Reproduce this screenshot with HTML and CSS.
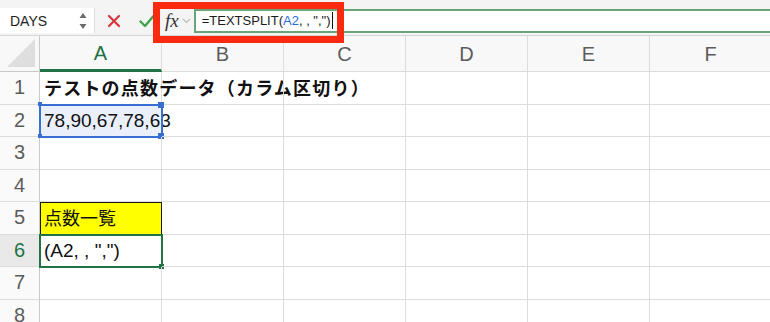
FILE: index.html
```html
<!DOCTYPE html>
<html lang="ja">
<head>
    <meta charset="UTF-8">
    <title>TEXTSPLIT</title>
    <link rel="stylesheet" href="styles.css">
</head>
<body>
  <div class="toolbar">
    <div class="namebox">
      <span class="name">DAYS</span>
      <span class="spin">
        <svg width="8" height="20" viewBox="0 0 8 20"><path d="M4 2 L7.5 7 L0.5 7 Z M0.5 13 L7.5 13 L4 18 Z" fill="#6b6b6b"/></svg>
      </span>
    </div>
    <div class="btns">
      <svg class="cancel" width="14" height="14" viewBox="0 0 14 14"><path d="M2 2 L12 12 M12 2 L2 12" stroke="#d8363c" stroke-width="2.2" stroke-linecap="round"/></svg>
      <svg class="enter" width="16" height="14" viewBox="0 0 16 14"><path d="M1.5 7.5 L6 12 L14.5 2" stroke="#3fa34d" stroke-width="2.4" fill="none" stroke-linecap="round" stroke-linejoin="round"/></svg>
    </div>
    <div class="fx">
      <span class="fxlabel">fx</span>
      <svg width="9" height="6" viewBox="0 0 9 6"><path d="M1 1 L4.5 4.5 L8 1" stroke="#bdbdbd" stroke-width="1.2" fill="none"/></svg>
    </div>
    <div class="formula">=TEXTSPLIT(<span class="ref">A2</span>, , ",")<span class="caret"></span></div>
    <div class="mark"></div>
  </div>

  <div class="sheet">
    <div class="hd corner"><span class="tri"></span></div>
    <div class="hd col active">A</div>
    <div class="hd col">B</div>
    <div class="hd col">C</div>
    <div class="hd col">D</div>
    <div class="hd col">E</div>
    <div class="hd col">F</div>

    <div class="hd row">1</div>
    <div class="cell title">テストの点数データ（カラム区切り）</div>
    <div class="cell"></div><div class="cell"></div><div class="cell"></div><div class="cell"></div><div class="cell"></div>

    <div class="hd row">2</div>
    <div class="cell num picked">78,90,67,78,63
      <span class="knob tl"></span><span class="knob tr"></span><span class="knob bl"></span><span class="knob br"></span>
    </div>
    <div class="cell"></div><div class="cell"></div><div class="cell"></div><div class="cell"></div><div class="cell"></div>

    <div class="hd row">3</div>
    <div class="cell"></div><div class="cell"></div><div class="cell"></div><div class="cell"></div><div class="cell"></div><div class="cell"></div>

    <div class="hd row">4</div>
    <div class="cell"></div><div class="cell"></div><div class="cell"></div><div class="cell"></div><div class="cell"></div><div class="cell"></div>

    <div class="hd row">5</div>
    <div class="cell label">点数一覧</div>
    <div class="cell"></div><div class="cell"></div><div class="cell"></div><div class="cell"></div><div class="cell"></div>

    <div class="hd row current">6</div>
    <div class="cell num editing">(A2, , ",")<span class="fill"></span></div>
    <div class="cell"></div><div class="cell"></div><div class="cell"></div><div class="cell"></div><div class="cell"></div>

    <div class="hd row">7</div>
    <div class="cell"></div><div class="cell"></div><div class="cell"></div><div class="cell"></div><div class="cell"></div><div class="cell"></div>

    <div class="hd row">8</div>
    <div class="cell"></div><div class="cell"></div><div class="cell"></div><div class="cell"></div><div class="cell"></div><div class="cell"></div>
  </div>
</body>
</html>
```

FILE: styles.css
```css
body {
    margin: 0;
    background: #ffffff;
    font-family: "Liberation Sans", Arial, "Noto Sans CJK JP", sans-serif;
    overflow: hidden;
}

.toolbar {
    position: relative;
    display: flex;
    align-items: center;
    height: 35px;
    background: #f4f4f4;
    border-bottom: 1px solid #d6d6d6;
}
.namebox {
    display: flex;
    align-items: center;
    justify-content: space-between;
    width: 95px;
    height: 25px;
    margin-top: 6px;
    padding: 0 7px 0 10px;
    box-sizing: border-box;
    background: #ffffff;
    border-right: 1px solid #dddddd;
    font-size: 14px;
    color: #1d1d1d;
}
.spin svg { display: block; }
.btns {
    display: flex;
    align-items: center;
    gap: 18px;
    margin: 6px 0 0 12px;
}
.btns svg { display: block; }
.fx {
    display: flex;
    align-items: center;
    gap: 3px;
    margin: 6px 0 0 10px;
}
.fxlabel {
    font-family: "Liberation Serif", "Times New Roman", serif;
    font-style: italic;
    font-size: 19px;
    color: #333333;
}
.formula {
    flex: 1;
    height: 20px;
    margin: 6px 0 0 3px;
    padding-left: 6px;
    background: #ffffff;
    border-top: 2px solid #6aa57a;
    border-bottom: 2px solid #6aa57a;
    border-left: 2px solid #6aa57a;
    font-size: 13px;
    line-height: 20px;
    color: #1b1b1b;
}
.ref { color: #2c6bd6; }
.caret {
    display: inline-block;
    width: 1px;
    height: 17px;
    margin-left: 1px;
    vertical-align: -4px;
    background: #111111;
}
.mark {
    position: absolute;
    left: 153px;
    top: 2px;
    width: 191px;
    height: 41px;
    box-sizing: border-box;
    border: 7px solid #fa2a10;
}

.sheet {
    display: grid;
    grid-template-columns: 40px repeat(6, 122px);
    grid-template-rows: 36px repeat(8, 32.5px);
}
.hd {
    display: flex;
    align-items: center;
    justify-content: center;
    box-sizing: border-box;
    background: #f8f8f8;
    color: #5c5c5c;
    font-size: 20px;
    border-right: 1px solid #dcdcdc;
    border-bottom: 1px solid #dcdcdc;
}
.hd.col { padding-top: 2px; }
.hd.corner {
    position: relative;
    border-right: 1px solid #c9c9c9;
    border-bottom: 1px solid #c9c9c9;
}
.tri {
    position: absolute;
    right: 4px;
    bottom: 4px;
    width: 0;
    height: 0;
    border-left: 28px solid transparent;
    border-bottom: 28px solid #dedede;
}
.hd.row {
    border-right: 1px solid #c9c9c9;
    background: #fafafa;
}
.hd.active {
    color: #217346;
    border-bottom: 3px solid #217346;
}
.hd.current {
    color: #217346;
    background: #e9e9e9;
}

.cell {
    position: relative;
    box-sizing: border-box;
    padding-left: 4px;
    border-right: 1px solid #dcdcdc;
    border-bottom: 1px solid #dcdcdc;
    font-size: 18px;
    line-height: 31px;
    white-space: nowrap;
    color: #111111;
}
.title {
    font-family: "Noto Sans CJK JP", sans-serif;
    font-weight: bold;
    font-size: 18px;
    letter-spacing: 1.2px;
}
.num { font-size: 19px; }
.label {
    font-family: "Noto Sans CJK JP", sans-serif;
    background: #ffff00;
    outline: 1px solid #1a1a1a;
    outline-offset: -1px;
}
.picked {
    background: #eaf0fb;
    outline: 2px solid #3a6fd2;
    outline-offset: -1px;
}
.knob {
    position: absolute;
    width: 6px;
    height: 6px;
    background: #3a6fd2;
}
.knob.tl { left: -2px; top: -3px; width: 4px; height: 4px; }
.knob.tr { right: -3px; top: -3px; }
.knob.bl { left: -2px; bottom: -2px; width: 4px; height: 4px; }
.knob.br { right: -3px; bottom: -3px; }
.editing {
    outline: 2px solid #217346;
    outline-offset: -1px;
}
.fill {
    position: absolute;
    right: -3px;
    bottom: -3px;
    width: 5px;
    height: 5px;
    background: #217346;
}
```
